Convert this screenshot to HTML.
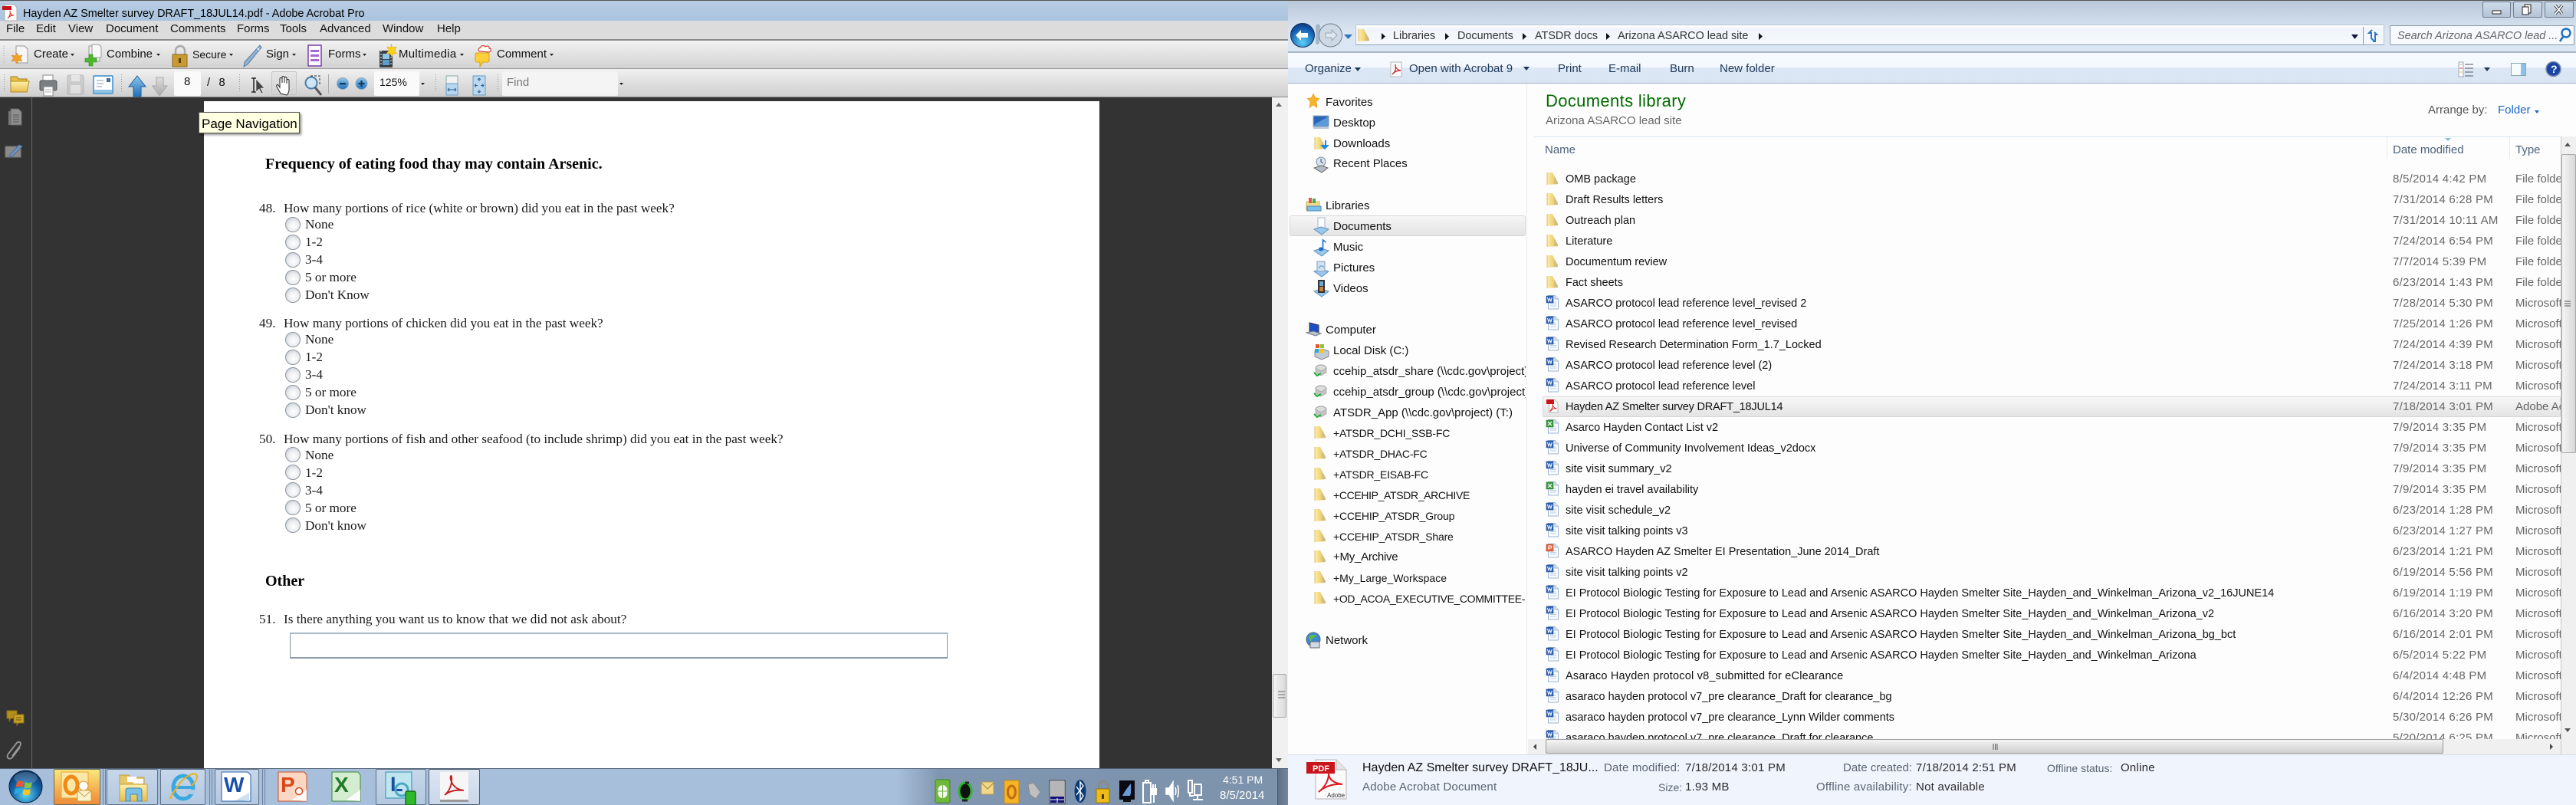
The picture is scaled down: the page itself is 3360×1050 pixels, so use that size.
<!DOCTYPE html>
<html><head><meta charset="utf-8"><title>Hayden AZ Smelter survey</title>
<style>
html,body{margin:0;padding:0;width:3360px;height:1050px;overflow:hidden;background:#333}
body{position:relative;font-family:"Liberation Sans",sans-serif;font-size:15px;color:#000}
.b{position:absolute}
.t{position:absolute;white-space:nowrap;line-height:20px;font-size:15px}
.s{font-family:"Liberation Serif",serif;font-size:17.2px;color:#1a1a1a}
.h{font-family:"Liberation Serif",serif;font-size:20px;font-weight:bold;color:#000}
.rd{position:absolute;left:372px;width:18px;height:18px;border:1px solid #8b97a3;border-radius:50%;background:radial-gradient(circle at 55% 60%,#fff 0,#eceef1 45%,#bfc6ce 92%)}
.m{color:#111}
.w{color:#fff}
.c{font-size:14.4px}
#list{position:absolute;left:1992px;top:207px;width:1348px;height:757px;overflow:hidden}
#rows{position:absolute;left:0;top:14px;width:1348px}
.r{height:27px;line-height:27px;position:relative;white-space:nowrap;font-size:14.5px}
.r i{font-style:normal;position:absolute;left:50px;color:#111}
.r u{text-decoration:none;position:absolute;left:1129px;top:-1px;color:#666;font-size:15px;letter-spacing:.25px}
.r s{text-decoration:none;position:absolute;left:1289px;top:-1px;color:#666;width:59px;overflow:hidden;font-size:15px}
.nv{position:absolute;left:1739px;width:251px;overflow:hidden;white-space:nowrap;line-height:27px;height:27px;color:#111;font-size:15px}
.nh{left:1729px}
.cp{font-size:14px;letter-spacing:-.2px}
#ov{position:absolute;left:0;top:0;z-index:3}
.top{z-index:4}
.d{color:#5a6472;letter-spacing:.2px}
.v{color:#2b2b2b;letter-spacing:.25px}
</style></head><body>

<!-- ACROBAT WINDOW -->
<div class="b" style="left:0;top:0;width:1680px;height:27px;background:linear-gradient(#b9cde2,#a9c3de);border-top:1px solid #555;box-sizing:border-box"></div>
<div class="b" style="left:0;top:27px;width:1680px;height:24px;background:#dcdcdc"></div>
<div class="b" style="left:0;top:51px;width:1680px;height:2px;background:#8b8b8b"></div>
<div class="b" style="left:0;top:53px;width:1680px;height:36px;background:linear-gradient(#f2f2f2,#d2d2d2);border-bottom:1px solid #9a9a9a"></div>
<div class="b" style="left:0;top:90px;width:1680px;height:37px;background:linear-gradient(#f0f0f0,#cfcfcf);border-bottom:1px solid #888;box-sizing:border-box"></div>
<div class="b" style="left:41px;top:127px;width:1px;height:875px;background:#666"></div>
<div class="b" style="left:266px;top:132px;width:1168px;height:870px;background:#fff"></div>
<!-- left scrollbar -->
<div class="b" style="left:1659px;top:127px;width:21px;height:875px;background:#f0f0f0"></div>
<div class="b" style="left:1660px;top:879px;width:18px;height:57px;border:1px solid #a8a8a8;border-radius:2px;background:linear-gradient(90deg,#f4f4f4,#dadada);box-sizing:border-box"></div>

<span class="t" style="left:30px;top:8px;font-size:14.4px">Hayden AZ Smelter survey DRAFT_18JUL14.pdf - Adobe Acrobat Pro</span>
<span class="t m" style="left:8px;top:28px">File</span>
<span class="t m" style="left:47px;top:28px">Edit</span>
<span class="t m" style="left:89px;top:28px">View</span>
<span class="t m" style="left:138px;top:28px">Document</span>
<span class="t m" style="left:222px;top:28px">Comments</span>
<span class="t m" style="left:309px;top:28px">Forms</span>
<span class="t m" style="left:365px;top:28px">Tools</span>
<span class="t m" style="left:417px;top:28px">Advanced</span>
<span class="t m" style="left:499px;top:28px">Window</span>
<span class="t m" style="left:570px;top:28px">Help</span>

<span class="t m" style="left:44px;top:61px">Create</span>
<span class="t m" style="left:139px;top:61px">Combine</span>
<span class="t m" style="left:251px;top:61px;font-size:14px">Secure</span>
<span class="t m" style="left:347px;top:61px">Sign</span>
<span class="t m" style="left:428px;top:61px">Forms</span>
<span class="t m" style="left:520px;top:61px;letter-spacing:.3px">Multimedia</span>
<span class="t m" style="left:648px;top:61px">Comment</span>

<div class="b" style="left:227px;top:93px;width:35px;height:32px;background:#fafafa;border-radius:2px"></div>
<span class="t m" style="left:240px;top:97px">8</span>
<span class="t m" style="left:270px;top:98px;word-spacing:7px">/ 8</span>
<div class="b" style="left:354px;top:93px;width:33px;height:31px;background:linear-gradient(#e6e6e6,#d2d2d2);border:1px solid #c4c4c4;border-radius:2px;box-sizing:border-box"></div>
<div class="b" style="left:488px;top:93px;width:59px;height:32px;background:#fafafa;border-radius:2px"></div>
<span class="t m" style="left:495px;top:97px;font-size:14px">125%</span>
<div class="b" style="left:655px;top:93px;width:151px;height:32px;background:#f4f4f4;border-radius:2px"></div>
<span class="t" style="left:661px;top:98px;color:#777">Find</span>

<!-- Tooltip -->
<div class="b" style="left:259px;top:146px;width:132px;height:28px;background:#ffffe1;border:1px solid #555;box-sizing:border-box;box-shadow:2px 2px 3px rgba(0,0,0,.45);z-index:5"></div>
<span class="t" style="left:263px;top:152px;z-index:6;font-size:17px">Page Navigation</span>

<!-- PDF content -->
<span class="t h" style="left:346px;top:204px">Frequency of eating food thay may contain Arsenic.</span>

<span class="t s" style="left:338px;top:262px">48.</span>
<span class="t s" style="left:370px;top:262px">How many portions of rice (white or brown) did you eat in the past week?</span>
<div class="rd" style="top:283px"></div><span class="t s" style="left:398px;top:283px">None</span>
<div class="rd" style="top:306px"></div><span class="t s" style="left:398px;top:306px">1-2</span>
<div class="rd" style="top:329px"></div><span class="t s" style="left:398px;top:329px">3-4</span>
<div class="rd" style="top:352px"></div><span class="t s" style="left:398px;top:352px">5 or more</span>
<div class="rd" style="top:375px"></div><span class="t s" style="left:398px;top:375px">Don't Know</span>

<span class="t s" style="left:338px;top:412px">49.</span>
<span class="t s" style="left:370px;top:412px">How many portions of chicken did you eat in the past week?</span>
<div class="rd" style="top:433px"></div><span class="t s" style="left:398px;top:433px">None</span>
<div class="rd" style="top:456px"></div><span class="t s" style="left:398px;top:456px">1-2</span>
<div class="rd" style="top:479px"></div><span class="t s" style="left:398px;top:479px">3-4</span>
<div class="rd" style="top:502px"></div><span class="t s" style="left:398px;top:502px">5 or more</span>
<div class="rd" style="top:525px"></div><span class="t s" style="left:398px;top:525px">Don't know</span>

<span class="t s" style="left:338px;top:563px">50.</span>
<span class="t s" style="left:370px;top:563px">How many portions of fish and other seafood (to include shrimp) did you eat in the past week?</span>
<div class="rd" style="top:583px"></div><span class="t s" style="left:398px;top:584px">None</span>
<div class="rd" style="top:606px"></div><span class="t s" style="left:398px;top:607px">1-2</span>
<div class="rd" style="top:629px"></div><span class="t s" style="left:398px;top:630px">3-4</span>
<div class="rd" style="top:652px"></div><span class="t s" style="left:398px;top:653px">5 or more</span>
<div class="rd" style="top:675px"></div><span class="t s" style="left:398px;top:676px">Don't know</span>

<span class="t h" style="left:346px;top:748px">Other</span>
<span class="t s" style="left:338px;top:798px">51.</span>
<span class="t s" style="left:370px;top:798px">Is there anything you want us to know that we did not ask about?</span>
<div class="b" style="left:378px;top:825px;width:858px;height:34px;background:#fff;border:1px solid #7f94a8;border-top:2px solid #a9b9c8;border-bottom:2px solid #8a9bab;box-sizing:border-box"></div>

<!-- TASKBAR -->
<div class="b" style="left:0;top:1002px;width:1680px;height:48px;background:linear-gradient(90deg,#a8bfdb 0,#a8bfdb 1170px,#8096b0 1225px,#7d92ab 1664px);border-top:1px solid #4f6075;box-sizing:border-box"></div>
<div class="b" style="left:70px;top:1003px;width:61px;height:47px;background:linear-gradient(#f9e87d,#f3a447 70%,#ed8c3e);border:1px solid #6b6b5a;border-radius:2px;box-sizing:border-box"></div>
<div class="b" style="left:139px;top:1003px;width:67px;height:47px;background:linear-gradient(#c7d7ea,#b3c8e1);border:1px solid #5f7086;border-radius:2px;box-sizing:border-box"></div>
<div class="b" style="left:209px;top:1003px;width:59px;height:47px;background:linear-gradient(#c7d7ea,#b3c8e1);border:1px solid #5f7086;border-radius:2px;box-sizing:border-box"></div>
<div class="b" style="left:280px;top:1003px;width:58px;height:47px;background:linear-gradient(#c7d7ea,#b3c8e1);border:1px solid #5f7086;border-radius:2px;box-sizing:border-box"></div>
<div class="b" style="left:490px;top:1003px;width:66px;height:47px;background:linear-gradient(#c7d7ea,#b3c8e1);border:1px solid #5f7086;border-radius:2px;box-sizing:border-box"></div>
<div class="b" style="left:559px;top:1003px;width:67px;height:47px;background:linear-gradient(#dde6f1,#c8d7ea);border:1px solid #4e5c6e;border-radius:2px;box-sizing:border-box"></div>
<div class="b" style="left:134px;top:1003px;width:1px;height:47px;background:#6d82a0"></div><div class="b" style="left:137px;top:1003px;width:1px;height:47px;background:#6d82a0"></div>
<div class="b" style="left:273px;top:1003px;width:1px;height:47px;background:#6d82a0"></div><div class="b" style="left:276px;top:1003px;width:1px;height:47px;background:#6d82a0"></div>
<div class="b" style="left:342px;top:1003px;width:1px;height:47px;background:#6d82a0"></div><div class="b" style="left:345px;top:1003px;width:1px;height:47px;background:#6d82a0"></div>
<div class="b" style="left:1666px;top:1003px;width:14px;height:47px;background:linear-gradient(90deg,#5f7187,#74879e);border-left:1px solid #46566a;box-sizing:border-box"></div>
<span class="t w" style="left:1595px;top:1007px;font-size:14px">4:51 PM</span>
<span class="t w" style="left:1591px;top:1028px">8/5/2014</span>

<!-- EXPLORER -->
<div class="b" style="left:1680px;top:0;width:1680px;height:67px;background:linear-gradient(#b8c7d8,#d9e5f2 60%,#dbe7f3);border-top:1px solid #555;box-sizing:border-box"></div>
<div class="b" style="left:1680px;top:67px;width:1680px;height:2px;background:#a9b7c6"></div>
<div class="b" style="left:1680px;top:69px;width:1680px;height:40px;background:linear-gradient(#f7fbff 0,#f3f8fe 48%,#dce7f5 50%,#dae5f3 100%);border-bottom:1px solid #a5b3c3;box-sizing:border-box"></div>
<div class="b" style="left:1680px;top:109px;width:1680px;height:875px;background:radial-gradient(ellipse 500px 60px at 2500px 30px,#f6f9fb,#fdfdfd 90%),#fdfdfd"></div>
<div class="b" style="left:1991px;top:109px;width:1px;height:875px;background:#e9ecef"></div>
<div class="b" style="left:2001px;top:178px;width:1339px;height:1px;background:#d6e5f0"></div>
<div class="b" style="left:3113px;top:179px;width:1px;height:28px;background:#e6edf3"></div>
<div class="b" style="left:3273px;top:179px;width:1px;height:28px;background:#e6edf3"></div>
<!-- address -->
<div class="b" style="left:1768px;top:32px;width:1342px;height:27px;background:linear-gradient(#fff 0,#fff 2px,#f1f6fc 3px,#f4f8fd);border:1px solid #b9c5d2;border-bottom:1px solid #93a1b0;box-sizing:border-box"></div>
<div class="b" style="left:3117px;top:33px;width:241px;height:26px;background:#f6f9fd;border:1px solid #8e99a6;border-radius:2px;box-sizing:border-box"></div>
<div class="b" style="left:3238px;top:2px;width:37px;height:21px;background:linear-gradient(#cfdbe8,#b4c4d6);border:1px solid #6f7f91;border-radius:2px;box-sizing:border-box"></div>
<div class="b" style="left:3278px;top:2px;width:38px;height:21px;background:linear-gradient(#cfdbe8,#b4c4d6);border:1px solid #6f7f91;border-radius:2px;box-sizing:border-box"></div>
<div class="b" style="left:3319px;top:2px;width:38px;height:21px;background:linear-gradient(#cfdbe8,#b4c4d6);border:1px solid #6f7f91;border-radius:2px;box-sizing:border-box"></div>

<span class="t c" style="left:1817px;top:37px;color:#333">Libraries</span>
<span class="t c" style="left:1901px;top:37px;color:#333">Documents</span>
<span class="t c" style="left:2002px;top:37px;color:#333">ATSDR docs</span>
<span class="t c" style="left:2110px;top:37px;color:#333">Arizona ASARCO lead site</span>
<span class="t c" style="left:3127px;top:37px;font-style:italic;color:#666">Search Arizona ASARCO lead ...</span>

<span class="t" style="left:1702px;top:80px;color:#1e3958">Organize</span>
<span class="t" style="left:1838px;top:80px;color:#1e3958">Open with Acrobat 9</span>
<span class="t" style="left:2032px;top:80px;color:#1e3958">Print</span>
<span class="t" style="left:2098px;top:80px;color:#1e3958">E-mail</span>
<span class="t" style="left:2178px;top:80px;color:#1e3958">Burn</span>
<span class="t" style="left:2243px;top:80px;color:#1e3958">New folder</span>

<span class="t" style="left:2016px;top:120px;font-size:22px;line-height:24px;color:#006a00;letter-spacing:.35px">Documents library</span>
<span class="t" style="left:2016px;top:148px;color:#666">Arizona ASARCO lead site</span>
<span class="t" style="left:3167px;top:134px;color:#555">Arrange by:</span>
<span class="t" style="left:3258px;top:134px;color:#1a66c8">Folder</span>
<span class="t" style="left:2015px;top:186px;color:#4c607a">Name</span>
<span class="t" style="left:3121px;top:186px;color:#4c607a">Date modified</span>
<span class="t" style="left:3281px;top:186px;color:#4c607a">Type</span>

<!-- nav -->
<div class="b" style="left:1682px;top:281px;width:308px;height:27px;background:linear-gradient(#f6f6f6,#e4e4e4);border:1px solid #d6d6d6;border-radius:3px;box-sizing:border-box"></div>
<div class="nv nh" style="top:120px">Favorites</div>
<div class="nv" style="top:147px">Desktop</div>
<div class="nv" style="top:174px">Downloads</div>
<div class="nv" style="top:200px">Recent Places</div>
<div class="nv nh" style="top:255px">Libraries</div>
<div class="nv" style="top:282px">Documents</div>
<div class="nv" style="top:309px">Music</div>
<div class="nv" style="top:336px">Pictures</div>
<div class="nv" style="top:363px">Videos</div>
<div class="nv nh" style="top:417px">Computer</div>
<div class="nv" style="top:444px">Local Disk (C:)</div>
<div class="nv" style="top:471px">ccehip_atsdr_share (\\cdc.gov\project) (S:)</div>
<div class="nv" style="top:498px">ccehip_atsdr_group (\\cdc.gov\project) (R:)</div>
<div class="nv" style="top:525px">ATSDR_App (\\cdc.gov\project) (T:)</div>
<div class="nv cp" style="top:552px">+ATSDR_DCHI_SSB-FC</div>
<div class="nv cp" style="top:579px">+ATSDR_DHAC-FC</div>
<div class="nv cp" style="top:606px">+ATSDR_EISAB-FC</div>
<div class="nv cp" style="top:633px;letter-spacing:-.35px">+CCEHIP_ATSDR_ARCHIVE</div>
<div class="nv cp" style="top:660px">+CCEHIP_ATSDR_Group</div>
<div class="nv cp" style="top:687px">+CCEHIP_ATSDR_Share</div>
<div class="nv" style="top:713px;letter-spacing:-.25px">+My_Archive</div>
<div class="nv cp" style="top:741px;letter-spacing:0">+My_Large_Workspace</div>
<div class="nv cp" style="top:768px;letter-spacing:-.35px">+OD_ACOA_EXECUTIVE_COMMITTEE-</div>
<div class="nv nh" style="top:822px">Network</div>

<!-- list -->
<div class="b" style="left:2012px;top:517px;width:1328px;height:27px;background:linear-gradient(#f7f7f7,#e4e4e4);border:1px solid #d8d8d8;border-radius:2px;box-sizing:border-box"></div>
<div id="list"><div id="rows">
<div class="r"><i>OMB package</i><u>8/5/2014 4:42 PM</u><s>File folder</s></div>
<div class="r"><i>Draft Results letters</i><u>7/31/2014 6:28 PM</u><s>File folder</s></div>
<div class="r"><i>Outreach plan</i><u>7/31/2014 10:11 AM</u><s>File folder</s></div>
<div class="r"><i>Literature</i><u>7/24/2014 6:54 PM</u><s>File folder</s></div>
<div class="r"><i>Documentum review</i><u>7/7/2014 5:39 PM</u><s>File folder</s></div>
<div class="r"><i>Fact sheets</i><u>6/23/2014 1:43 PM</u><s>File folder</s></div>
<div class="r"><i>ASARCO protocol lead reference level_revised 2</i><u>7/28/2014 5:30 PM</u><s>Microsoft</s></div>
<div class="r"><i>ASARCO protocol lead reference level_revised</i><u>7/25/2014 1:26 PM</u><s>Microsoft</s></div>
<div class="r"><i>Revised Research Determination Form_1.7_Locked</i><u>7/24/2014 4:39 PM</u><s>Microsoft</s></div>
<div class="r"><i>ASARCO protocol lead reference level (2)</i><u>7/24/2014 3:18 PM</u><s>Microsoft</s></div>
<div class="r"><i>ASARCO protocol lead reference level</i><u>7/24/2014 3:11 PM</u><s>Microsoft</s></div>
<div class="r"><i style="letter-spacing:-.2px">Hayden AZ Smelter survey DRAFT_18JUL14</i><u>7/18/2014 3:01 PM</u><s>Adobe Acrobat</s></div>
<div class="r"><i>Asarco Hayden Contact List v2</i><u>7/9/2014 3:35 PM</u><s>Microsoft</s></div>
<div class="r"><i>Universe of Community Involvement Ideas_v2docx</i><u>7/9/2014 3:35 PM</u><s>Microsoft</s></div>
<div class="r"><i>site visit summary_v2</i><u>7/9/2014 3:35 PM</u><s>Microsoft</s></div>
<div class="r"><i>hayden ei travel availability</i><u>7/9/2014 3:35 PM</u><s>Microsoft</s></div>
<div class="r"><i>site visit schedule_v2</i><u>6/23/2014 1:28 PM</u><s>Microsoft</s></div>
<div class="r"><i>site visit talking points v3</i><u>6/23/2014 1:27 PM</u><s>Microsoft</s></div>
<div class="r"><i>ASARCO Hayden AZ Smelter EI Presentation_June 2014_Draft</i><u>6/23/2014 1:21 PM</u><s>Microsoft</s></div>
<div class="r"><i>site visit talking points v2</i><u>6/19/2014 5:56 PM</u><s>Microsoft</s></div>
<div class="r"><i>EI Protocol Biologic Testing for Exposure to Lead and Arsenic ASARCO Hayden Smelter Site_Hayden_and_Winkelman_Arizona_v2_16JUNE14</i><u>6/19/2014 1:19 PM</u><s>Microsoft</s></div>
<div class="r"><i>EI Protocol Biologic Testing for Exposure to Lead and Arsenic ASARCO Hayden Smelter Site_Hayden_and_Winkelman_Arizona_v2</i><u>6/16/2014 3:20 PM</u><s>Microsoft</s></div>
<div class="r"><i>EI Protocol Biologic Testing for Exposure to Lead and Arsenic ASARCO Hayden Smelter Site_Hayden_and_Winkelman_Arizona_bg_bct</i><u>6/16/2014 2:01 PM</u><s>Microsoft</s></div>
<div class="r"><i>EI Protocol Biologic Testing for Exposure to Lead and Arsenic ASARCO Hayden Smelter Site_Hayden_and_Winkelman_Arizona</i><u>6/5/2014 5:22 PM</u><s>Microsoft</s></div>
<div class="r"><i style="letter-spacing:.2px">Asaraco Hayden protocol v8_submitted for eClearance</i><u>6/4/2014 4:48 PM</u><s>Microsoft</s></div>
<div class="r"><i>asaraco hayden protocol v7_pre clearance_Draft for clearance_bg</i><u>6/4/2014 12:26 PM</u><s>Microsoft</s></div>
<div class="r"><i>asaraco hayden protocol v7_pre clearance_Lynn Wilder comments</i><u>5/30/2014 6:26 PM</u><s>Microsoft</s></div>
<div class="r"><i>asaraco hayden protocol v7_pre clearance_Draft for clearance</i><u>5/20/2014 6:25 PM</u><s>Microsoft</s></div>
</div></div>

<!-- scrollbars -->
<div class="b top" style="left:3340px;top:178px;width:20px;height:806px;background:#f0f0f0;border-left:1px solid #c9c9c9;box-sizing:border-box"></div>
<div class="b top" style="left:3341px;top:201px;width:19px;height:390px;background:linear-gradient(90deg,#f4f4f4,#d8d8d8);border:1px solid #a8a8a8;border-radius:2px;box-sizing:border-box"></div>
<div class="b top" style="left:1993px;top:964px;width:1347px;height:20px;background:#f0f0f0"></div>
<div class="b top" style="left:2016px;top:964px;width:1171px;height:19px;background:linear-gradient(#f4f4f4,#cfcfcf);border:1px solid #9c9c9c;border-radius:2px;box-sizing:border-box"></div>

<!-- details -->
<div class="b" style="left:1680px;top:984px;width:1680px;height:66px;background:#f0f4fc;border-top:1px solid #d3deec;box-sizing:border-box"></div>
<span class="t" style="left:1777px;top:992px;font-size:16px;color:#111">Hayden AZ Smelter survey DRAFT_18JU...</span>
<span class="t d" style="left:1777px;top:1017px">Adobe Acrobat Document</span>
<span class="t d" style="left:2092px;top:992px">Date modified:</span><span class="t v" style="left:2198px;top:992px">7/18/2014 3:01 PM</span>
<span class="t d" style="left:2163px;top:1017px;font-size:14px;letter-spacing:0">Size:</span><span class="t v" style="left:2198px;top:1017px">1.93 MB</span>
<span class="t d" style="left:2404px;top:992px;letter-spacing:0">Date created:</span><span class="t v" style="left:2499px;top:992px">7/18/2014 2:51 PM</span>
<span class="t d" style="left:2369px;top:1017px">Offline availability:</span><span class="t v" style="left:2499px;top:1017px">Not available</span>
<span class="t d" style="left:2670px;top:992px;font-size:14px;letter-spacing:0">Offline status:</span><span class="t v" style="left:2766px;top:992px">Online</span>

<!-- ICON OVERLAY -->
<svg id="ov" width="3360" height="1050" viewBox="0 0 3360 1050" xmlns="http://www.w3.org/2000/svg" style="z-index:3;pointer-events:none">
<defs>
<linearGradient id="gy" x1="0" x2="1"><stop offset="0" stop-color="#fbeeb0"/><stop offset=".6" stop-color="#f0d06a"/><stop offset="1" stop-color="#dcb858"/></linearGradient>
<linearGradient id="gyv" x1="0" x2="0" y1="0" y2="1"><stop offset="0" stop-color="#fdf0a8"/><stop offset="1" stop-color="#e9bd4f"/></linearGradient>
<linearGradient id="gb" x1="0" x2="0" y1="0" y2="1"><stop offset="0" stop-color="#8fc6ec"/><stop offset="1" stop-color="#1f6fb8"/></linearGradient>
<linearGradient id="gg" x1="0" x2="0" y1="0" y2="1"><stop offset="0" stop-color="#ddd"/><stop offset="1" stop-color="#aaa"/></linearGradient>
<radialGradient id="orb" cx=".5" cy=".75" r=".75"><stop offset="0" stop-color="#5fd6f4"/><stop offset=".55" stop-color="#1566a8"/><stop offset="1" stop-color="#0a2f5e"/></radialGradient>
<radialGradient id="bk" cx=".5" cy=".8" r=".8"><stop offset="0" stop-color="#5bd0f6"/><stop offset=".7" stop-color="#1660b4"/><stop offset="1" stop-color="#0d3a7a"/></radialGradient>

<g id="fld"><path d="M1 1 L8 1 L10 5 L15 14 L15 16 L1 17Z" fill="url(#gy)"/><path d="M10 5 L15 14 L15 16 L10 16.4Z" fill="#cdbb8a" opacity=".8"/><path d="M1 1V17" stroke="#d9bf70" stroke-width="1"/></g>
<g id="doc"><path d="M2.5 .5 H11 L15.5 5 V18 H2.5Z" fill="#fafcff" stroke="#9db5d3"/><path d="M11 .5 V5 H15.5" fill="#e0ebf7" stroke="#9db5d3"/><path d="M5 9h8M5 11.5h8M5 14h8" stroke="#b5cbe3" stroke-width="1"/></g>
<g id="wd"><use href="#doc"/><rect x="0" y="1" width="9" height="9" fill="#2d62b8" stroke="#1a3f80" stroke-width=".5"/><path d="M1.5 3l1.4 5 1.5-4 1.5 4 1.4-5" fill="none" stroke="#fff" stroke-width="1"/></g>
<g id="xl"><use href="#doc"/><rect x="0" y="1" width="9" height="9" fill="#3b9a3f" stroke="#1c6a22" stroke-width=".5"/><path d="M2 3l5 5M7 3l-5 5" stroke="#fff" stroke-width="1.2"/></g>
<g id="pp"><use href="#doc"/><rect x="0" y="1" width="9" height="9" fill="#e0613a" stroke="#a83a1a" stroke-width=".5"/><path d="M3 8V3h2.4a1.4 1.4 0 010 3H3" fill="none" stroke="#fff" stroke-width="1.1"/></g>
<g id="pdf"><path d="M3.5 1.5 H11 L15 5.5 V18 H3.5Z" fill="#fbfbfb" stroke="#b8b8b8"/><rect x="0" y="1" width="10" height="6" fill="#c8141c"/><path d="M5 16c3-3 4-6 3.5-10-.6 4 1 6 5 7-4-.6-6 .5-8 3z" fill="none" stroke="#d22" stroke-width="1"/></g>
<g id="drv"><ellipse cx="10" cy="6" rx="7" ry="4" fill="#ddd" stroke="#999"/><path d="M3 6v6l7 4 7-4V6l-7 4z" fill="#c4c4c4" stroke="#999" stroke-width=".6"/><path d="M1 12l4 4 5-3" fill="none" stroke="#23a83a" stroke-width="2"/></g>
<g id="sep"><path d="M.5 0V24" stroke="#999" stroke-width="1" stroke-dasharray="1 2"/></g>
<path id="arr" d="M0 0h5l-2.5 3z" fill="#222"/>
</defs>

<!-- acrobat title icon -->
<g transform="translate(3,6)"><path d="M3 0h13l3 4v17H3Z" fill="#fff" stroke="#aaa"/><rect x="0" y="2" width="12" height="5" fill="#c8141c"/><path d="M7 18c3-3 4-6 3-10 0 4 2 6 5 6-3 0-6 1-8 4z" fill="none" stroke="#d22"/></g>

<!-- toolbar 1 -->
<path d="M5 60v24" stroke="#aaa" stroke-dasharray="1 2"/>
<g transform="translate(14,58)"><path d="M7 2h11l4 4v18H7z" fill="#f6f6f6" stroke="#999"/><path d="M8 11l2.3 4 4.7-1-2.5 4 2.5 4-4.7-1-2.3 4-2.3-4-4.700 1 2.500-4-2.500-4 4.700 1z" fill="#f0a028" stroke="#d27c10" stroke-width=".5"/></g>
<use href="#arr" x="92" y="70"/>
<g transform="translate(110,58)"><path d="M6 2h10l4 4v16H6z" fill="#eee" stroke="#999"/><path d="M10 0h9l3 3v14H10z" fill="#f8f8f8" stroke="#999"/><path d="M6 13h5v5h5v5h-5v5h-5v-5H1v-5h5z" fill="#4cb82c" stroke="#2a8a14" stroke-width=".6"/></g>
<use href="#arr" x="204" y="70"/>
<g transform="translate(224,59)"><path d="M5 12V7a6 6 0 0112 0v5" fill="none" stroke="#a9a9a9" stroke-width="2.500"/><rect x="1" y="12" width="19" height="16" fill="#c79a34" stroke="#8f6a18"/><rect x="9" y="17" width="3" height="6" fill="#5a3d08"/></g>
<use href="#arr" x="299" y="70"/>
<g transform="translate(317,58)"><path d="M22 1l2 3L6 26l-5 3 1-6z" fill="#8fb2d6" stroke="#5a7fa6"/><path d="M19 5l2 2" stroke="#eef" stroke-width="2"/></g>
<use href="#arr" x="381" y="70"/>
<g transform="translate(401,59)"><rect x="1" y="0" width="17" height="27" fill="#fbfbff" stroke="#7a3fa8" stroke-width="1.500"/><path d="M4 6h11v3H4zM4 12h11v3H4zM4 18h11v3H4z" fill="#a56ad0"/></g>
<use href="#arr" x="473" y="70"/>
<g transform="translate(493,57)"><rect x="2" y="9" width="17" height="22" fill="#3a3f44"/><rect x="6" y="13" width="9" height="7" fill="#8fc7e6"/><rect x="6" y="21" width="9" height="7" fill="#5aa0cc"/><path d="M3 10h2M3 14h2M3 18h2M3 22h2M3 26h2M16 10h2M16 14h2M16 18h2M16 22h2M16 26h2" stroke="#eee"/><path d="M17 0l2 5 5-1-2 5 3 4-5 0-2 4-2-4-5 0 3-4-2-5 5 1z" fill="#f8d020" stroke="#e0a010" stroke-width=".5"/></g>
<use href="#arr" x="600" y="70"/>
<g transform="translate(619,59)"><path d="M8 8c-4 0-4-4 0-5 0-3 5-3 6-1 3-2 6 0 5 2 3 0 3 4 0 5z" fill="#fff" stroke="#d8452c" stroke-width="1.200"/><path d="M3 10h14a2 2 0 012 2v8a2 2 0 01-2 2h-6l-4 6v-6H3a2 2 0 01-2-2v-8a2 2 0 012-2z" fill="#fbd03a" stroke="#d8a014"/></g>
<use href="#arr" x="717" y="70"/>

<!-- toolbar 2 -->
<use href="#sep" transform="translate(5,97)"/>
<g transform="translate(13,98)"><path d="M1 2h8l2 3h11v3H1z" fill="#e8c042" stroke="#a07e18"/><path d="M1 22V8h24l-3 14z" fill="url(#gyv)" stroke="#b08a20"/></g>
<g transform="translate(51,97)"><rect x="5" y="1" width="13" height="7" fill="#fff" stroke="#888"/><rect x="1" y="8" width="22" height="13" rx="2" fill="#7a7f84" stroke="#555"/><rect x="6" y="16" width="12" height="12" fill="#fff" stroke="#888"/><path d="M8 20h8M8 23h8" stroke="#aaa"/></g>
<g transform="translate(88,98)" opacity=".55"><rect x="0" y="0" width="21" height="25" rx="2" fill="#bbb" stroke="#999"/><rect x="5" y="0" width="11" height="8" fill="#e6e6e6"/><rect x="4" y="13" width="13" height="11" fill="#e6e6e6"/></g>
<g transform="translate(122,99)"><rect x="0" y="0" width="25" height="23" rx="1" fill="#fff" stroke="#3a8ec8" stroke-width="1.500"/><rect x="1" y="18" width="23" height="4" fill="#90c4e6"/><rect x="17" y="3" width="5" height="5" fill="#3a6ea8"/><path d="M4 6h9M4 10h9M4 14h7" stroke="#8a9ab0"/></g>
<use href="#sep" transform="translate(158,97)"/>
<path d="M168 113 L179 99 L190 113 H184 V126 H174 V113Z" fill="url(#gb)" stroke="#1a5f9c"/>
<path d="M199 112 L208 125 L218 112 H213 V101 H204 V112Z" fill="url(#gg)" stroke="#a9a9a9"/>
<use href="#sep" transform="translate(312,97)"/>
<g transform="translate(326,101)"><path d="M2 1h6M2 19h6M5 1v18" stroke="#222" stroke-width="1.500"/><path d="M8 2l0 17 4-4 3 6 2-1-3-6h5z" fill="#444" stroke="#eee" stroke-width=".6"/></g>
<g transform="translate(360,98)"><path d="M6 24l-5-9c-1-2 1-3 2-2l2 3V5c0-2 3-2 3 0v5V3c0-2 3-2 3 0v7-6c0-2 3-2 3 0v7-4c0-2 3-2 3 0v12c0 4-2 6-3 7z" fill="#fff" stroke="#333" stroke-width="1.100"/></g>
<g transform="translate(397,98)"><path d="M8 1h12v12" fill="none" stroke="#333" stroke-dasharray="3 2"/><circle cx="9" cy="10" r="7.500" fill="#cfe4f4" stroke="#4a7ea8" stroke-width="2"/><path d="M14 16l8 10" stroke="#555" stroke-width="3"/></g>
<path d="M428.500 97V122" stroke="#aaa"/>
<g transform="translate(439,100)"><circle cx="8" cy="9" r="7.500" fill="url(#gb)" stroke="#9ab"/><rect x="4" y="8" width="8" height="2.400" fill="#123a66"/></g>
<g transform="translate(464,100)"><circle cx="7.500" cy="9" r="7.500" fill="url(#gb)" stroke="#9ab"/><path d="M3.500 9h8M7.500 5v8" stroke="#123a66" stroke-width="2.200"/></g>
<use href="#arr" x="549" y="108"/>
<use href="#sep" transform="translate(568,97)"/>
<g transform="translate(582,99)"><rect x="0" y="0" width="15" height="25" fill="#f2f2f2" stroke="#8aa"/><rect x="0" y="10" width="15" height="15" fill="#b8d6ee" stroke="#6a9ac0"/><path d="M2 18h11M2 18l2-2M2 18l2 2M13 18l-2-2M13 18l-2 2" stroke="#2a5f92" fill="none"/></g>
<g transform="translate(617,99)"><rect x="0" y="0" width="16" height="25" fill="#bcd9f0" stroke="#6a9ac0"/><path d="M8 3v4M8 3l-2 2M8 3l2 2M8 22v-4M8 22l-2-2M8 22l2-2M2 12.500h4M2 12.500l2-2M2 12.500l2 2M14 12.500h-4M14 12.500l-2-2M14 12.500l-2 2" stroke="#2a5f92" fill="none"/></g>
<use href="#sep" transform="translate(649,97)"/>
<use href="#arr" x="808" y="108"/>

<!-- sidebar -->
<g transform="translate(11,142)" fill="#8f8f8f"><path d="M0 3h5v18H0z" fill="#777"/><path d="M3 0h10l4 4v17H3z" stroke="#666"/><path d="M6 8h8M6 11h8M6 14h8M6 17h8" stroke="#555"/></g>
<g transform="translate(7,187)"><rect x="0" y="4" width="20" height="14" fill="#8a8a8a" stroke="#777"/><path d="M5 16L18 2l4 2L8 18z" fill="#6f93bd" stroke="#4a6f99"/></g>
<g transform="translate(8,927)"><path d="M1 0h13v10H6l-2 4v-4H1z" fill="#b48f1e" stroke="#8a6d14"/><path d="M10 5h13v11h-7l-2 3v-3h-4z" fill="#c9a126" stroke="#8a6d14"/><path d="M13 9h7M13 12h7" stroke="#6a500a"/></g>
<path d="M26 975 L16 988 C12 992 7 988 11 983 L22 969 C25 966 29 969 26 973 L16 986" transform="translate(0,0)" fill="none" stroke="#9a9a9a" stroke-width="1.800"/>

<!-- taskbar icons -->
<ellipse cx="33.500" cy="1026" rx="21.500" ry="21" fill="url(#orb)" stroke="#08203f"/>
<ellipse cx="33.500" cy="1015" rx="15" ry="8" fill="#fff" opacity=".18"/>
<path d="M22 1020c3-2 6-2 9 0l-1.500 7c-3-1.500-6-1.500-9 0z" fill="#e8563a"/><path d="M33 1020c3 2 6 2 9 0l-1.500 7c-3 1.500-6 1.500-9 0z" fill="#8cc63f"/><path d="M20 1029c3-1.500 6-1.500 9 0l-1.500 7c-3-1.500-6-1.500-9 0z" fill="#29a8e0"/><path d="M31 1029c3 1.500 6 1.500 9 0l-1.500 7c-3 1.500-6 1.500-9 0z" fill="#f8c520"/>

<g transform="translate(80,1007)"><rect x="0" y="0" width="35" height="34" fill="#fbe8a8" stroke="#e8a030"/><ellipse cx="13" cy="17" rx="8" ry="11" fill="none" stroke="#f08a14" stroke-width="5"/><circle cx="29" cy="18" r="6" fill="#fff" stroke="#e0902a"/><rect x="21" y="24" width="18" height="14" fill="#fbf3d0" stroke="#c8a040"/><path d="M21 24l9 8 9-8" fill="none" stroke="#c8a040"/></g>
<g transform="translate(154,1007)"><path d="M2 4h12l3 3h17v30H2z" fill="#e6c66a" stroke="#c4a040"/><rect x="12" y="6" width="12" height="7" fill="#fff"/><rect x="20" y="9" width="13" height="6" fill="#fff"/><rect x="2" y="16" width="36" height="22" fill="url(#gyv)" stroke="#c4a040"/><path d="M10 38V24a3 3 0 013-3h15a3 3 0 013 3v14h-6V29h-9v9z" fill="#7cc0e8" stroke="#3a8ab8"/></g>
<g transform="translate(221,1007)"><ellipse cx="18" cy="20" rx="13" ry="15" fill="none" stroke="#3aa8e0" stroke-width="5"/><rect x="6" y="18" width="25" height="4" fill="#3aa8e0"/><rect x="20" y="23" width="14" height="6" fill="#b3c8e1"/><path d="M3 33C-3 38 6 26 14 14 22 4 36-2 36 6c0 4-4 9-7 12" fill="none" stroke="#e8b020" stroke-width="2"/></g>
<g transform="translate(289,1006)"><path d="M0 1h34l4 4v34H0z" fill="#fff" stroke="#2a5fa8"/><text x="3" y="27" font-family="Liberation Sans,sans-serif" font-weight="bold" font-size="28" fill="#1b4fa8">W</text><path d="M18 38l18-10v11z" fill="#cfdff2"/></g>
<g transform="translate(363,1006)"><path d="M0 1h34l3 4v34H0z" fill="#fbd8c4" stroke="#c8502a"/><path d="M17 38l20-14v15z" fill="#fff" opacity=".85"/><text x="3" y="27" font-family="Liberation Sans,sans-serif" font-weight="bold" font-size="28" fill="#d8481a">P</text><circle cx="27" cy="26" r="4.500" fill="#fff" stroke="#d8481a" stroke-width="1.500"/></g>
<g transform="translate(433,1006)"><path d="M0 1h34l3 4v34H0z" fill="#d4ecd0" stroke="#3a8a3a"/><text x="3" y="27" font-family="Liberation Sans,sans-serif" font-weight="bold" font-size="28" fill="#1f7a2a">X</text><path d="M18 38l19-14v15z" fill="#fff" opacity=".85"/></g>
<g transform="translate(503,1006)"><path d="M0 1h34v34H0z" fill="#bfe6ee" stroke="#2f8fb0"/><text x="6" y="26" font-family="Liberation Sans,sans-serif" font-weight="bold" font-size="27" fill="#1c4ea0">L</text><circle cx="21" cy="24" r="8" fill="none" stroke="#49a9c4" stroke-width="3"/><rect x="26" y="26" width="13" height="18" rx="2" fill="#2fb82a" stroke="#1a6a14" stroke-width="1.400"/></g>
<g transform="translate(574,1007)"><rect x="0" y="0" width="37" height="38" fill="#f6f6f6"/><rect x="0" y="36" width="37" height="3" fill="#999"/><path d="M6 30c7-6 10-15 9-24 -1-3-2 1-1 4 2 8 8 13 17 14 -9-1-18 0-25 6z" fill="none" stroke="#c41a20" stroke-width="1.800"/></g>

<!-- tray -->
<g transform="translate(1220,1017)"><rect x="0" y="0" width="19" height="30" rx="2" fill="#6fb83c" stroke="#3f8a1c"/><path d="M9.500 7a6 6 0 016 6v5a6 6 0 01-12 0v-5a6 6 0 016-6z" fill="#f4f4f4"/><path d="M9.500 7v17M3 15h13" stroke="#6fb83c"/></g>
<g transform="translate(1248,1017)"><ellipse cx="11" cy="15" rx="8" ry="11" fill="#111" stroke="#2ab82a" stroke-width="3"/><path d="M11 4h5M7 27h7" stroke="#222" stroke-width="3"/></g>
<g transform="translate(1280,1020)"><rect x="0" y="0" width="16" height="16" fill="#f3d987" stroke="#b89a50"/><path d="M0 1l8 8 8-8" fill="none" stroke="#a0843c"/></g>
<g transform="translate(1310,1018)"><rect x="0" y="0" width="19" height="30" rx="2" fill="#f4b428" stroke="#c9880c"/><ellipse cx="9.500" cy="15" rx="5" ry="8" fill="none" stroke="#c46c10" stroke-width="3"/></g>
<g transform="translate(1340,1021)"><path d="M1 2l7-2 9 12-6 9-8-6z" fill="#c0c0c0" stroke="#8a8a8a"/></g>
<g transform="translate(1369,1018)"><rect x="0" y="0" width="20" height="30" fill="#fff" stroke="#111" stroke-width=".8"/><rect x="1" y="1" width="18" height="20" fill="#b6b6b6"/><rect x="1" y="21" width="18" height="8" fill="#12127a"/><path d="M10 23v6M1 25h18" stroke="#fff"/></g>
<g transform="translate(1401,1017)"><ellipse cx="8" cy="15" rx="7.500" ry="15" fill="#0b3a78"/><path d="M3 9l9 12-4 6V3l4 5-9 12" fill="none" stroke="#fff" stroke-width="1.400"/></g>
<g transform="translate(1429,1017)"><path d="M4 12V8a6 6 0 0112 0v4" fill="none" stroke="#8a8a8a" stroke-width="2.500"/><rect x="1" y="12" width="17" height="18" fill="#eebc18" stroke="#9a7408"/><rect x="8" y="19" width="3" height="6" fill="#4a3808"/></g>
<g transform="translate(1460,1018)"><rect x="0" y="0" width="20" height="25" fill="#0a0a14"/><path d="M4 20C8 12 12 8 15 4 15 10 16 14 14 20z" fill="#6a9cd8"/><rect x="5" y="25" width="10" height="3" fill="#111"/></g>
<g transform="translate(1490,1017)" fill="none" stroke="#fff" stroke-width="2"><rect x="1" y="4" width="10" height="26"/><path d="M4 4V1h4v3"/><rect x="12" y="12" width="6" height="7" fill="#fff"/><path d="M14 6v6M17 6v6M15 19v11"/></g>
<g transform="translate(1520,1018)" fill="none" stroke="#fff" stroke-width="1.600"><path d="M1 10h4l5-8v24l-5-8H1z" fill="#fff"/><path d="M13 9c1 3 1 7 0 10M16 6c1.500 5 1.500 11 0 16"/></g>
<g transform="translate(1549,1017)" fill="none" stroke="#fff" stroke-width="2"><rect x="1" y="1" width="5" height="16"/><rect x="9" y="6" width="9" height="14"/><path d="M13 20v5M7 26h13"/><path d="M3 17v4h5"/></g>

<!-- explorer nav icons -->
<path d="M1716 34c2-4 4-4 6 0l-1 22c-2 3-4 3-5 0z" fill="#a7b6c8"/>
<circle cx="1699" cy="46" r="15.500" fill="url(#bk)" stroke="#0c2c5c"/>
<path d="M1690 46l7-7v4h9v6h-9v4z" fill="#fff"/>
<circle cx="1735.500" cy="46" r="15" fill="#ced9e5" stroke="#6e7d8c"/>
<path d="M1744 46l-7-7v4h-8v6h8v4z" fill="#dfe7f0" stroke="#9aa8b8"/>
<path d="M1753 45h11l-5.500 6z" fill="#2f75c0"/>
<use href="#fld" x="1771" y="37"/>
<g fill="#111"><path d="M1802 43l5 4.500-5 4.500z"/><path d="M1885 43l5 4.500-5 4.500z"/><path d="M1986 43l5 4.500-5 4.500z"/><path d="M2095 43l5 4.500-5 4.500z"/><path d="M2294 43l5 4.500-5 4.500z"/></g>
<path d="M3067 45h9l-4.500 6z" fill="#15183c"/>
<path d="M3082.500 35V58" stroke="#8e99a6"/>
<path d="M3096 53l-3-3v-7h-3l4-4 0 0M3097 42l3 3h-2v9h-3" fill="none" stroke="#2f75c0" stroke-width="2"/>
<circle cx="3347" cy="43" r="5.500" fill="none" stroke="#2272bc" stroke-width="2.400"/><path d="M3343 48l-4 6" stroke="#2272bc" stroke-width="2.600"/>
<rect x="3251" y="14" width="11" height="4" fill="#fff" stroke="#222"/>
<g fill="#fff" stroke="#222"><rect x="3293" y="6" width="8" height="11"/><rect x="3290" y="9" width="8" height="10"/></g>
<path d="M3333 7l9 11M3342 7l-9 11" stroke="#222" stroke-width="3.500"/><path d="M3333 7l9 11M3342 7l-9 11" stroke="#f4f6f8" stroke-width="2"/>

<path d="M1767 88h8l-4 5z" fill="#1e3958"/>
<g transform="translate(1813,80)"><path d="M1 1h14v19H1z" fill="#fafafa" stroke="#b8b8b8"/><path d="M3 17c4-3 5-8 4-13 0 4 2 7 7 8-4 0-8 1-11 5z" fill="none" stroke="#c8202a" stroke-width="1.200"/></g>
<path d="M1987 87h8l-4 5z" fill="#1e3958"/>
<g transform="translate(3207,81)"><rect x="0" y="0" width="6" height="19" fill="#fff" stroke="#9aa"/><path d="M8 3h11M8 8h11M8 13h11M8 18h11" stroke="#556"/><path d="M1 3h4" stroke="#caa"/><path d="M1 8h4" stroke="#e24"/><path d="M1 13h4" stroke="#db4"/></g>
<path d="M3240 88h8l-4 5z" fill="#1e3958"/>
<rect x="3275.500" y="82.500" width="19" height="16" fill="#f6fbff" stroke="#8aa"/><rect x="3288" y="83" width="6" height="15" fill="#8cc0e6"/>
<circle cx="3330.500" cy="90" r="9.500" fill="#1a45a8" stroke="#7c8ea8" stroke-width="1.500"/>
<text x="3327" y="95" font-family="Liberation Sans,sans-serif" font-weight="bold" font-size="14" fill="#fff">?</text>

<path d="M3306 144h6l-3 4z" fill="#1a66c8"/>
<path d="M3189 180h8l-4 4z" fill="#8bbedc"/>

<!-- nav pane icons -->
<path d="M1713 122l2.800 5.600 5.200 1-4 4 1 8-5-3.600-5 3.600 1-8-4-4 5.200-1z" fill="#f6b22c" stroke="#e09010" stroke-width=".5"/>
<g transform="translate(1713,151)"><rect x="0" y="0" width="20" height="14" fill="#2a66b8" stroke="#9db0c4"/><path d="M1 12C6 8 14 5 19 1v12H1z" fill="#5a9ad8"/><rect x="0" y="14" width="20" height="3" fill="#b9c6d6"/></g>
<use href="#fld" x="1714" y="178"/><path d="M1723 190h6v-6h2v6h4l-6 6z" fill="#1c8ae0" transform="translate(-1,-1)"/>
<g transform="translate(1713,204)"><circle cx="10" cy="7" r="6" fill="#d6e2ee" stroke="#7e8ea0"/><path d="M10 3v4l3 2" stroke="#446" fill="none"/><path d="M1 15l10-3 8 3-8 6z" fill="#b4bcc6" stroke="#666"/></g>
<g transform="translate(1704,258)"><rect x="0" y="5" width="17" height="11" fill="#f2dc8c" stroke="#cdb060"/><rect x="3" y="0" width="4" height="7" fill="#e8534a"/><rect x="8" y="1" width="4" height="6" fill="#46a84a"/><rect x="1" y="11" width="18" height="6" fill="#7cc0e8" stroke="#4a8ab8"/></g>
<g transform="translate(1713,284)"><path d="M6 0h9v15H6z" fill="#fff" stroke="#9db5d3"/><path d="M1 15l9-3 10 3-9 7z" fill="#9ac7ec" stroke="#5d93c0"/></g>
<g transform="translate(1713,312)"><path d="M1 15l9-3 10 3-9 7z" fill="#9ac7ec" stroke="#5d93c0"/><ellipse cx="10" cy="13" rx="3" ry="2.500" fill="#1f6ed0"/><path d="M12.500 13V1l4 3" fill="none" stroke="#1f6ed0" stroke-width="1.600"/></g>
<g transform="translate(1713,339)"><path d="M1 15l9-3 10 3-9 7z" fill="#9ac7ec" stroke="#5d93c0"/><path d="M5 2h10v13H5z" fill="#cde2f4" stroke="#8a9eb4"/><path d="M7 11c2-4 5-4 7-1" stroke="#4a90c8" fill="none"/></g>
<g transform="translate(1713,365)"><path d="M1 15l9-3 10 3-9 7z" fill="#9ac7ec" stroke="#5d93c0"/><rect x="6" y="0" width="9" height="17" fill="#333"/><rect x="8" y="2" width="5" height="6" fill="#6aa8d8"/><rect x="8" y="9" width="5" height="6" fill="#c8803a"/></g>
<g transform="translate(1704,421)"><path d="M4 0l12 3v11l-12-3z" fill="#1a50c8" stroke="#334"/><path d="M0 13l12 4 7-3-10-3z" fill="#b8c4d2" stroke="#778"/></g>
<g transform="translate(1713,448)"><path d="M2 10l9-3 9 3v7l-9 4-9-4z" fill="#c4cad2" stroke="#889"/><path d="M3 1h5v5H3z" fill="#e6583a"/><path d="M9 1h5v5H9z" fill="#8cc63f"/><path d="M2 7h5v5H2z" fill="#29a8e0"/><path d="M8 7h5v5H8z" fill="#f8c520"/></g>
<use href="#drv" x="1713" y="474"/><use href="#drv" x="1713" y="501"/><use href="#drv" x="1713" y="528"/>
<use href="#fld" x="1714" y="555"/><use href="#fld" x="1714" y="582"/><use href="#fld" x="1714" y="609"/><use href="#fld" x="1714" y="636"/><use href="#fld" x="1714" y="663"/><use href="#fld" x="1714" y="690"/><use href="#fld" x="1714" y="717"/><use href="#fld" x="1714" y="744"/><use href="#fld" x="1714" y="771"/>
<g transform="translate(1704,824)"><circle cx="9" cy="10" r="9" fill="#3a8ad8" stroke="#567"/><path d="M3 6c3-2 6-3 10-1-1 3-5 2-6 6-1 3-4 0-4-5z" fill="#5cb84a"/><rect x="5" y="13" width="12" height="8" fill="#d4dae2" stroke="#667"/></g>

<!-- list icons -->
<use href="#fld" x="2017" y="224"/><use href="#fld" x="2017" y="251"/><use href="#fld" x="2017" y="278"/><use href="#fld" x="2017" y="305"/><use href="#fld" x="2017" y="332"/><use href="#fld" x="2017" y="359"/>
<use href="#wd" x="2017" y="385"/><use href="#wd" x="2017" y="412"/><use href="#wd" x="2017" y="439"/><use href="#wd" x="2017" y="466"/><use href="#wd" x="2017" y="493"/>
<use href="#pdf" x="2017" y="520"/>
<use href="#xl" x="2017" y="547"/><use href="#wd" x="2017" y="574"/><use href="#wd" x="2017" y="601"/><use href="#xl" x="2017" y="628"/><use href="#wd" x="2017" y="655"/><use href="#wd" x="2017" y="682"/><use href="#pp" x="2017" y="709"/><use href="#wd" x="2017" y="736"/><use href="#wd" x="2017" y="763"/><use href="#wd" x="2017" y="790"/><use href="#wd" x="2017" y="817"/><use href="#wd" x="2017" y="844"/><use href="#wd" x="2017" y="871"/><use href="#wd" x="2017" y="898"/><use href="#wd" x="2017" y="925"/><use href="#wd" x="2017" y="952"/>

<!-- details pdf icon -->
<g transform="translate(1704,990)"><path d="M12 1h27l13 13v38H12z" fill="#fbfbfb" stroke="#b4b4b4"/><path d="M39 1v13h13" fill="#e4e4e4" stroke="#b4b4b4"/><rect x="0" y="4" width="37" height="15" fill="#c8141c"/><text x="8" y="16" font-family="Liberation Sans,sans-serif" font-weight="bold" font-size="11" fill="#fff">PDF</text><path d="M16 43c9-7 14-17 13-27-1 9 4 15 18 17-10-1-23 2-31 10z" fill="none" stroke="#e01820" stroke-width="2"/><text x="27" y="50" font-family="Liberation Sans,sans-serif" font-size="8" fill="#333">Adobe</text></g>
</svg>

<!-- scrollbar glyphs above -->
<svg class="b top" style="left:0;top:0" width="3360" height="1050" viewBox="0 0 3360 1050" xmlns="http://www.w3.org/2000/svg">
<path d="M1664 989h8l-4 5z" fill="#666"/>
<path d="M1664 139h8l-4-5z" fill="#666"/>
<path d="M1667 902h9M1667 906h9M1667 910h9" stroke="#666"/>
<path d="M3345 191h8l-4-5z" fill="#555"/>
<path d="M3345 950h8l-4 5z" fill="#555"/>
<path d="M3345 393h8M3345 396h8M3345 399h8" stroke="#555"/>
<path d="M2004 970v8l-4-4z" fill="#444"/>
<path d="M3326 970v8l4-4z" fill="#444"/>
<path d="M2600 970v8M2602.500 970v8M2605 970v8" stroke="#555"/>
</svg>
</body></html>
